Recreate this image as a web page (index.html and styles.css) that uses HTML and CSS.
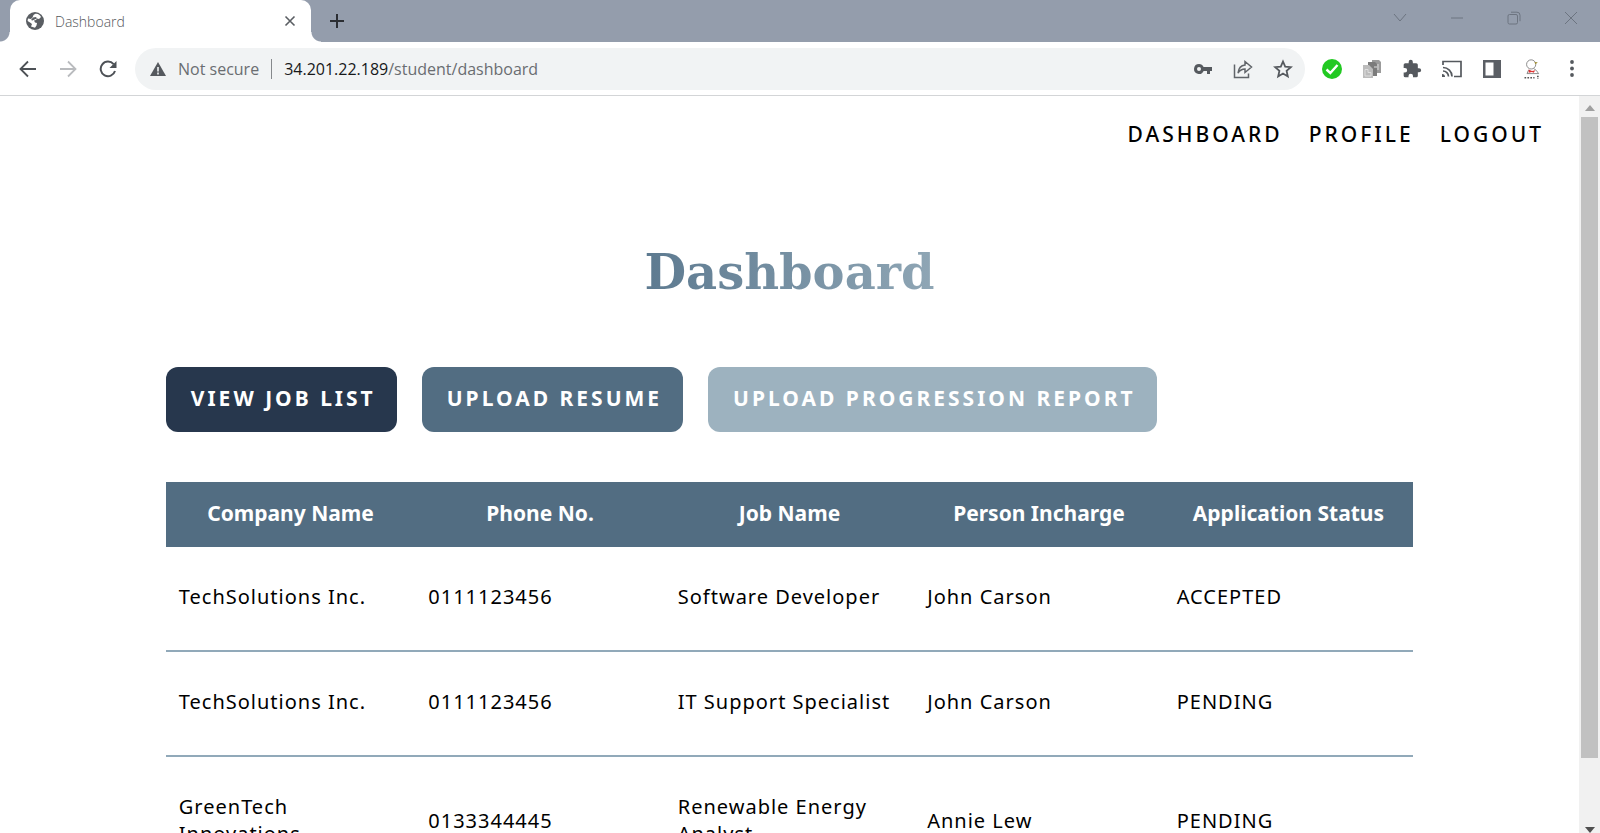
FILE: index.html
```html
<!DOCTYPE html>
<html lang="en">
<head>
<meta charset="utf-8">
<title>Dashboard</title>
<link rel="stylesheet" href="styles.css">
</head>
<body>
<div class="browser">
  <div class="tabstrip">
    <div class="tab">
      <svg class="icon-18" viewBox="0 0 18 18"><circle cx="9" cy="9" r="9" fill="#5a5e63"/><path d="M9 2c3-.6 5 1 6 3l-2 2-2-.5-1 1.500-2 .5 1 2 2 .5-.5 2.500L9 15.800 5 14.500l1-2.500-2-1.500L1.600 9 2 6.500l3 .5 1.500-1.500L7.500 3z" fill="#fff"/><path d="M7 5.500l3-.5 1 1.500-2.500 1-2 1L5 8z" fill="#5a5e63"/></svg>
      <span class="tab-title">Dashboard</span>
      <button class="icon-btn" aria-label="Close tab"><svg class="icon-12" viewBox="0 0 12 12"><path d="M1.500 1.500l9 9M10.500 1.500l-9 9" stroke="#5a5e63" stroke-width="1.600"/></svg></button>
    </div>
    <button class="icon-btn new-tab" aria-label="New tab"><svg class="icon-16" viewBox="0 0 16 16"><path d="M8 1v14M1 8h14" stroke="#2b2e33" stroke-width="2"/></svg></button>
    <div class="window-controls">
      <button class="icon-btn" aria-label="Search tabs"><svg class="icon-14" viewBox="0 0 14 14"><path d="M1 3l6 7 6-7" /></svg></button>
      <button class="icon-btn" aria-label="Minimize"><svg class="icon-14" viewBox="0 0 14 14"><path d="M1 7h12"/></svg></button>
      <button class="icon-btn" aria-label="Restore"><svg class="icon-14" viewBox="0 0 14 14"><rect x="1" y="3.500" width="9.500" height="9.500" rx="1.500"/><path d="M4 1.200h6q3 0 3 3v6"/></svg></button>
      <button class="icon-btn" aria-label="Close"><svg class="icon-14" viewBox="0 0 14 14"><path d="M1 1l12 12M13 1L1 13"/></svg></button>
    </div>
  </div>

  <div class="toolbar">
    <div class="nav-buttons">
      <button class="icon-btn" aria-label="Back"><svg class="icon-18" viewBox="0 0 18 18"><path d="M17 9H2M9 1.500L1.500 9 9 16.500" fill="none" stroke="#4d5156" stroke-width="1.800"/></svg></button>
      <button class="icon-btn" aria-label="Forward"><svg class="icon-18" viewBox="0 0 18 18"><path d="M1 9h15M9 1.500L16.500 9 9 16.500" fill="none" stroke="#b9bbbe" stroke-width="1.800"/></svg></button>
      <button class="icon-btn" aria-label="Reload"><svg class="icon-18" viewBox="0 0 18 18"><path d="M14.600 4.200A7.300 7.300 0 1 0 16 11" fill="none" stroke="#4d5156" stroke-width="2"/><path d="M17.500 1v7h-7z" fill="#4d5156"/></svg></button>
    </div>
    <div class="address-bar">
      <svg class="icon-16" viewBox="0 0 16 16"><path d="M8 1l8 14H0z" fill="#55595e"/><path d="M8 6v4.500M8 11.500v2" stroke="#f1f3f4" stroke-width="1.600"/></svg>
      <label class="security" for="url">Not secure</label>
      <div class="url" id="url" role="textbox"><span class="host">34.201.22.189</span>/student/dashboard</div>
      <div class="address-actions">
        <button class="icon-btn" aria-label="Passwords"><svg class="icon-20" viewBox="0 0 20 20"><path fill="#55595e" fill-rule="evenodd" d="M6 5a5 5 0 1 0 4.600 7H14v3h3v-3h2V8h-8.400A5 5 0 0 0 6 5zm0 3a2 2 0 1 1 0 4 2 2 0 0 1 0-4z"/></svg></button>
        <button class="icon-btn" aria-label="Share"><svg class="icon-20" viewBox="0 0 20 20"><g fill="none" stroke="#606469" stroke-width="1.500"><path d="M1.500 5.500v13h14v-4"/><path d="M12 2.500l6.500 5.500-6.500 5.500v-3.500c-3 0-5 1-7 4 .5-4.500 3-7.500 7-8z"/></g></svg></button>
        <button class="icon-btn" aria-label="Bookmark"><svg class="icon-20" viewBox="0 0 20 20"><path d="M10 2.500l2.200 5.200 5.600.5-4.200 3.700 1.200 5.500-4.800-2.900-4.800 2.900 1.200-5.500-4.200-3.700 5.600-.5z" fill="none" stroke="#55595e" stroke-width="1.800"/></svg></button>
      </div>
    </div>
    <div class="extensions">
      <button class="icon-btn" aria-label="Status"><svg class="icon-20" viewBox="0 0 20 20"><circle cx="10" cy="10" r="10" fill="#22c922"/><path d="M4.500 10.500l3.800 3.500 7.200-8" fill="none" stroke="#fff" stroke-width="2.400"/></svg></button>
      <button class="icon-btn" aria-label="Copies"><svg class="icon-20" viewBox="0 0 20 20"><path d="M10 1h7l2 2v11h-9z" fill="#9b9b9b"/><path d="M6 3h7l2 2v12H6z" fill="#7c7c7c"/><path d="M1 6h6l4 4v9H1z" fill="#bcbcbc"/><path d="M3 10.500h3v3h3V17H3zM12 8h3M16 5v6" fill="none" stroke="#dedede"/></svg></button>
      <button class="icon-btn" aria-label="Extensions"><svg class="icon-20" viewBox="0 0 24 24"><path fill="#55595e" d="M20.500 11H19V7a2 2 0 0 0-2-2h-4V3.500a2.500 2.500 0 0 0-5 0V5H4a2 2 0 0 0-2 2v3.800h1.500a2.700 2.700 0 0 1 0 5.400H2V20a2 2 0 0 0 2 2h3.800v-1.500a2.700 2.700 0 0 1 5.400 0V22H17a2 2 0 0 0 2-2v-4h1.500a2.500 2.500 0 0 0 0-5z"/></svg></button>
      <button class="icon-btn" aria-label="Cast"><svg class="icon-20" viewBox="0 0 20 20"><g fill="none" stroke="#55595e" stroke-width="1.700"><path d="M1 6V2.500h18v15h-7"/><path d="M1 8.500a9 9 0 0 1 9 9M1 12a5.500 5.500 0 0 1 5.500 5.500"/></g><path d="M0 15a3 3 0 0 1 3 3H0z" fill="#55595e"/></svg></button>
      <button class="icon-btn" aria-label="Side panel"><svg class="icon-20" viewBox="0 0 20 20"><path fill="#5b5f65" fill-rule="evenodd" d="M1 1h18v18H1zm2.500 2.500v13h8v-13z"/></svg></button>
      <button class="icon-btn" aria-label="Profile"><svg class="icon-20" viewBox="2 0 20 24"><path d="M8 13l-2 4.500h14l-3-4-3-2" fill="#fff" stroke="#777"/><ellipse cx="11" cy="6.500" rx="5.500" ry="5.500" fill="#fff" stroke="#777"/><path d="M15 3.500l4 .5-3 2.500z" fill="#a3923a"/><path d="M8 12.500l4 2 4-1-2 3-2-1-4 1z" fill="#d33"/><path d="M3 22.500h12M19 20v4" stroke="#555" stroke-width="2" stroke-dasharray="2 1.500"/></svg></button>
      <button class="icon-btn" aria-label="Menu"><svg class="icon-20" viewBox="0 0 20 20"><g fill="#55595e"><circle cx="10" cy="3" r="1.900"/><circle cx="10" cy="9.500" r="1.900"/><circle cx="10" cy="16" r="1.900"/></g></svg></button>
    </div>
  </div>

  <div class="viewport">
    <div class="page">
      <nav class="site-nav">
        <a href="#dashboard">DASHBOARD</a>
        <a href="#profile">PROFILE</a>
        <a href="#logout">LOGOUT</a>
      </nav>
      <main class="content">
        <h1 class="title"><span class="title-text">Dashboard</span></h1>
        <div class="actions">
          <button class="action navy">VIEW JOB LIST</button>
          <button class="action slate">UPLOAD RESUME</button>
          <button class="action mist">UPLOAD PROGRESSION REPORT</button>
        </div>
        <table class="applications">
          <thead>
            <tr><th scope="col">Company Name</th><th scope="col">Phone No.</th><th scope="col">Job Name</th><th scope="col">Person Incharge</th><th scope="col">Application Status</th></tr>
          </thead>
          <tbody>
            <tr><td>TechSolutions Inc.</td><td>0111123456</td><td>Software Developer</td><td>John Carson</td><td>ACCEPTED</td></tr>
            <tr><td>TechSolutions Inc.</td><td>0111123456</td><td>IT Support Specialist</td><td>John Carson</td><td>PENDING</td></tr>
            <tr><td>GreenTech Innovations</td><td>0133344445</td><td>Renewable Energy Analyst</td><td>Annie Lew</td><td>PENDING</td></tr>
          </tbody>
        </table>
      </main>
    </div>
    <div class="scrollbar">
      <svg class="arrow" viewBox="0 0 10 6"><path d="M5 0l5 6H0z" fill="#a0a0a0"/></svg>
      <div class="thumb"></div>
      <svg class="arrow" viewBox="0 0 10 6"><path d="M0 0h10L5 6z" fill="#505050"/></svg>
    </div>
  </div>
</div>
</body>
</html>
```
FILE: styles.css
```css
* { box-sizing: border-box; }

body {
  margin: 0;
  background: #fff;
  color: #000;
  font-family: "Noto Sans", "Open Sans", sans-serif;
}

.browser {
  display: flex;
  flex-direction: column;
  height: 100vh;
  overflow: hidden;
}

.icon-btn {
  display: flex;
  padding: 0;
  border: 0;
  background: none;
}

.icon-12 { width: 12px; height: 12px; }
.icon-14 { width: 14px; height: 14px; }
.icon-16 { width: 16px; height: 16px; }
.icon-18 { width: 18px; height: 18px; }
.icon-20 { width: 20px; height: 20px; }

/* Tab strip */
.tabstrip {
  display: flex;
  flex: none;
  height: 42px;
  padding-left: 10px;
  background: #949dac;
}

.tab {
  position: relative;
  display: flex;
  align-items: center;
  gap: 11px;
  width: 301px;
  padding: 0 15px 0 16px;
  border-radius: 10px 10px 0 0;
  background: #fff;
}

/* Curved feet where the tab meets the toolbar */
.tab::before,
.tab::after {
  position: absolute;
  bottom: 0;
  width: 10px;
  height: 10px;
  content: "";
}

.tab::before {
  right: 100%;
  background: radial-gradient(circle at 0 0, #949dac 9px, #fff 10px);
}

.tab::after {
  left: 100%;
  background: radial-gradient(circle at 100% 0, #949dac 9px, #fff 10px);
}

.tab-title {
  flex: 1;
  color: #55585c;
  font-family: "Open Sans", sans-serif;
  font-size: 14px;
  font-weight: 300;
}

.new-tab {
  align-items: center;
  margin-left: 18px;
}

.window-controls {
  display: flex;
  gap: 43px;
  align-items: center;
  height: 36px;
  margin-left: auto;
  padding-right: 22px;
}

.window-controls svg {
  fill: none;
  stroke: #6c7480;
}

/* Toolbar */
.toolbar {
  display: flex;
  flex: none;
  align-items: center;
  height: 54px;
  padding: 0 18px 0 19px;
  border-bottom: 1px solid #d3d5d7;
}

.nav-buttons {
  display: flex;
  gap: 22px;
  padding-right: 18px;
}

.address-bar {
  display: flex;
  flex: 1;
  align-items: center;
  height: 42px;
  padding: 0 12px 0 15px;
  border-radius: 21px;
  background: #f1f3f4;
  color: #6a6d71;
  font-family: "Open Sans", sans-serif;
  font-size: 16px;
}

.security {
  margin-left: 12px;
  padding-right: 12px;
  border-right: 1px solid #85888c;
  line-height: 20px;
}

.url { padding-left: 12px; }
.host { color: #17181a; }

.address-actions {
  display: flex;
  gap: 20px;
  margin-left: auto;
}

.extensions {
  display: flex;
  gap: 20px;
  align-items: center;
  padding-left: 17px;
}

/* Page */
.viewport {
  display: flex;
  flex: 1;
  min-height: 0;
}

.page {
  flex: 1;
  overflow: hidden;
}

.site-nav {
  display: flex;
  justify-content: flex-end;
  gap: 26px;
  padding: 24px 35px 0 0;
  font-size: 21px;
  font-weight: 500;
  letter-spacing: 3px;
  line-height: 28px;
}

.site-nav a {
  color: #000;
  text-decoration: none;
}

.content {
  width: 79%;
  margin: 0 auto;
}

.title {
  margin: 92px 0 0;
  font-family: "DejaVu Serif", serif;
  font-size: 48px;
  line-height: 64px;
  text-align: center;
}

.title-text {
  background: linear-gradient(90deg, #5d7a90, #8fa6b5);
  background-clip: text;
  color: transparent;
}

.actions {
  display: flex;
  gap: 25px;
  margin-top: 63px;
}

.action {
  height: 65px;
  padding: 0 21px 3px 25px;
  border: 0;
  border-radius: 12px;
  color: #fff;
  font-family: inherit;
  font-size: 21px;
  font-weight: 700;
  letter-spacing: 3px;
}

.navy { background: #27374d; }
.slate { background: #526d82; }
.mist { background: #9db2bf; }

.applications {
  width: 100%;
  margin-top: 50px;
  border-collapse: collapse;
  table-layout: fixed;
  line-height: 27px;
}

.applications th {
  height: 65px;
  padding: 0 0 2px;
  background: #526d82;
  color: #fff;
  font-size: 21px;
  font-weight: 700;
}

.applications td {
  padding: 36px 13px 40px;
  border-bottom: 2px solid #91a9b9;
  font-size: 20px;
  letter-spacing: 1px;
}

/* Scrollbar */
.scrollbar {
  display: flex;
  flex: none;
  flex-direction: column;
  align-items: center;
  width: 21px;
  padding-top: 9px;
  background: #f1f1f1;
}

.arrow {
  width: 10px;
  height: 6px;
}

.thumb {
  flex: none;
  width: 17px;
  height: 88%;
  margin: 6px 0 auto;
  background: #c1c1c1;
}
```
